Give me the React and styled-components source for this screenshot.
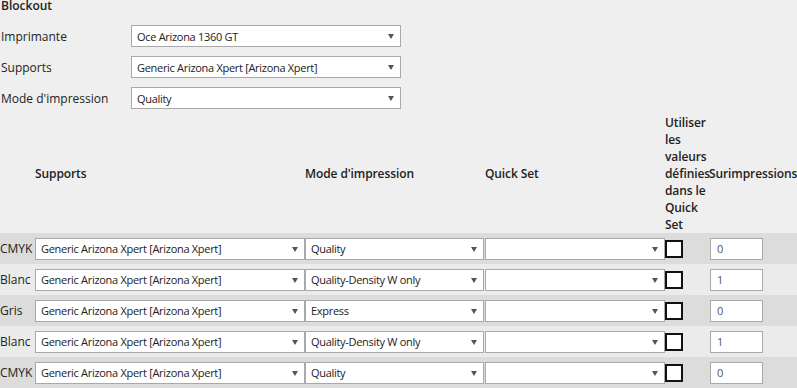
import styled, { createGlobalStyle } from 'styled-components';

const GlobalStyle = createGlobalStyle`
  html, body {
    margin: 0;
    padding: 0;
    background: #efefef;
  }
  body {
    font-family: 'Open Sans', 'Noto Sans', sans-serif;
    font-size: 12px;
    color: #222;
    overflow: hidden;
  }
`;

const Page = styled.div`
  width: 797px;
  height: 388px;
  overflow: hidden;
`;

const Title = styled.div`
  font-weight: 600;
  line-height: 12px;
  padding-left: 1px;
  color: #222;
`;

const Form = styled.div`
  display: grid;
  grid-template-columns: 131px 270px;
  grid-auto-rows: 22px;
  row-gap: 9px;
  align-items: center;
  margin-top: 13px;
`;

const Label = styled.div`
  padding-left: 1px;
  line-height: 17px;
`;

const SelectWrap = styled.div`
  position: relative;
  width: ${(p) => p.$width || '100%'};
  height: 22px;

  &::after {
    content: '';
    position: absolute;
    right: 7px;
    top: 9px;
    border-left: 3px solid transparent;
    border-right: 3px solid transparent;
    border-top: 5px solid #555;
    pointer-events: none;
  }
`;

const Select = styled.select`
  appearance: none;
  box-sizing: border-box;
  width: 100%;
  height: 22px;
  margin: 0;
  padding: 0 18px 0 5px;
  border: 1px solid #a9a9a9;
  border-radius: 0;
  background: #fff;
  font-family: 'Open Sans', 'Noto Sans', sans-serif;
  font-size: 11px;
  letter-spacing: -0.3px;
  color: #222;
  outline: none;
`;

const Table = styled.table`
  width: 797px;
  table-layout: fixed;
  border-collapse: collapse;
  border-spacing: 0;
  margin-top: 5px;
`;

const HeadCell = styled.th`
  font-weight: 600;
  text-align: left;
  vertical-align: middle;
  padding: 0;
  line-height: 17px;
  letter-spacing: -0.1px;
  color: #222;
  width: ${(p) => p.$w || 'auto'};
  white-space: ${(p) => (p.$nowrap ? 'nowrap' : 'normal')};
  overflow: visible;
`;

const Row = styled.tr`
  background: ${(p) => (p.$dark ? '#dcdcdc' : '#ebebeb')};
  height: 31px;
`;

const Cell = styled.td`
  padding: 0;
  vertical-align: middle;
  line-height: 17px;
  white-space: nowrap;
`;

const Check = styled.input.attrs({ type: 'checkbox' })`
  appearance: none;
  display: block;
  box-sizing: border-box;
  width: 18px;
  height: 18px;
  margin: 0;
  border: 2px solid #111;
  background: #fff;
  border-radius: 0;
`;

const NumInput = styled.input`
  box-sizing: border-box;
  display: block;
  width: 53px;
  height: 22px;
  margin: 0 0 0 1px;
  padding: 0 6px;
  border: 1px solid #a9a9a9;
  background: #fff;
  font-family: 'Open Sans', 'Noto Sans', sans-serif;
  font-size: 11px;
  color: #555;
  outline: none;
`;

const SUPPORT = 'Generic Arizona Xpert [Arizona Xpert]';

const rows = [
  { name: 'CMYK', mode: 'Quality', over: '0' },
  { name: 'Blanc', mode: 'Quality-Density W only', over: '1' },
  { name: 'Gris', mode: 'Express', over: '0' },
  { name: 'Blanc', mode: 'Quality-Density W only', over: '1' },
  { name: 'CMYK', mode: 'Quality', over: '0' },
];

const Dropdown = ({ value, width }) => (
  <SelectWrap $width={width}>
    <Select value={value} onChange={() => {}}>
      <option value={value}>{value}</option>
    </Select>
  </SelectWrap>
);

export default function App() {
  return (
    <Page>
      <GlobalStyle />
      <Title>Blockout</Title>
      <Form>
        <Label>Imprimante</Label>
        <Dropdown value="Oce Arizona 1360 GT" />
        <Label>Supports</Label>
        <Dropdown value={SUPPORT} />
        <Label>Mode d'impression</Label>
        <Dropdown value="Quality" />
      </Form>
      <Table>
        <thead>
          <tr>
            <HeadCell $w="35px" />
            <HeadCell $w="270px">Supports</HeadCell>
            <HeadCell $w="180px">Mode d'impression</HeadCell>
            <HeadCell $w="180px">Quick Set</HeadCell>
            <HeadCell $w="44px">Utiliser les valeurs définies dans le Quick Set</HeadCell>
            <HeadCell $nowrap>Surimpressions</HeadCell>
          </tr>
        </thead>
        <tbody>
          {rows.map((r, i) => (
            <Row key={i} $dark={i % 2 === 0}>
              <Cell>{r.name}</Cell>
              <Cell>
                <Dropdown value={SUPPORT} />
              </Cell>
              <Cell>
                <Dropdown value={r.mode} width="179px" />
              </Cell>
              <Cell>
                <Dropdown value="" />
              </Cell>
              <Cell>
                <Check />
              </Cell>
              <Cell>
                <NumInput value={r.over} onChange={() => {}} />
              </Cell>
            </Row>
          ))}
        </tbody>
      </Table>
    </Page>
  );
}
